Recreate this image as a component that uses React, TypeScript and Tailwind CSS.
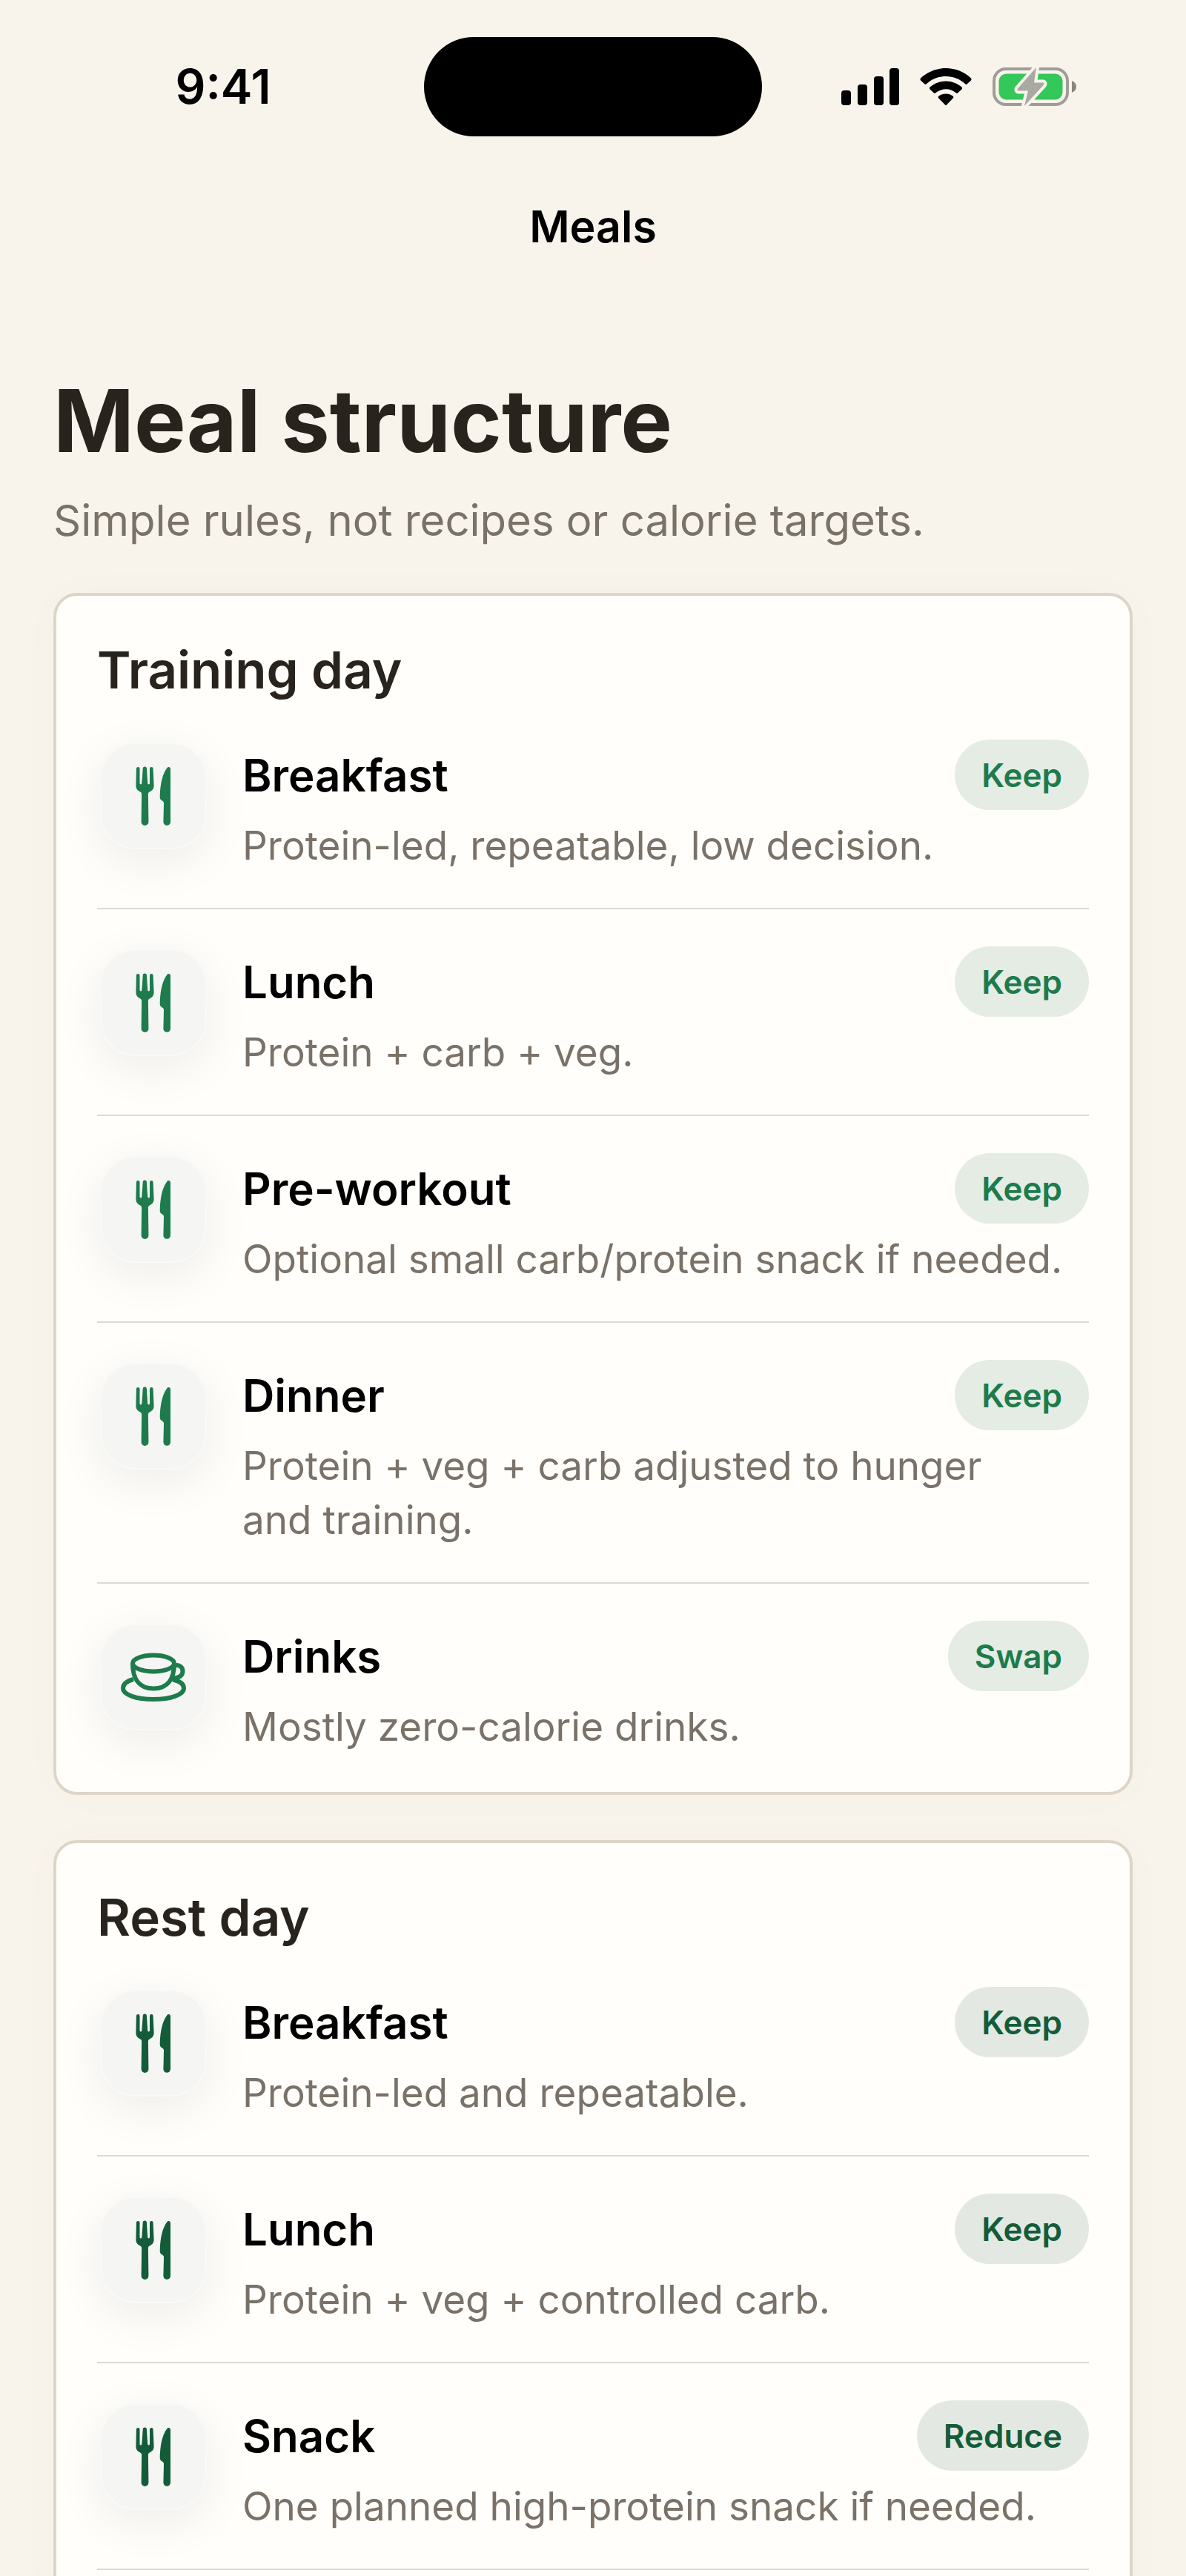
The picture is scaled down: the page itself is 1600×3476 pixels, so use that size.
type IconName = 'fork' | 'cup';

type Meal = {
  name: string;
  detail: string;
  action: string;
  icon: IconName;
};

type Day = {
  title: string;
  accent: string;
  badge: string;
  list: string;
  meals: Meal[];
};

const days: Day[] = [
  {
    title: 'Training day',
    accent: 'text-[#1d7b4c]',
    badge: 'bg-[#e4ece4]',
    list: '',
    meals: [
      { name: 'Breakfast', detail: 'Protein-led, repeatable, low decision.', action: 'Keep', icon: 'fork' },
      { name: 'Lunch', detail: 'Protein + carb + veg.', action: 'Keep', icon: 'fork' },
      { name: 'Pre-workout', detail: 'Optional small carb/protein snack if needed.', action: 'Keep', icon: 'fork' },
      { name: 'Dinner', detail: 'Protein + veg + carb adjusted to hunger and\u00a0training.', action: 'Keep', icon: 'fork' },
      { name: 'Drinks', detail: 'Mostly zero-calorie drinks.', action: 'Swap', icon: 'cup' }
    ]
  },
  {
    title: 'Rest day',
    accent: 'text-[#145c39]',
    badge: 'bg-[#e3e9e2]',
    // the list runs on past the fold
    list: 'border-b-2 mb-16',
    meals: [
      { name: 'Breakfast', detail: 'Protein-led and repeatable.', action: 'Keep', icon: 'fork' },
      { name: 'Lunch', detail: 'Protein + veg + controlled carb.', action: 'Keep', icon: 'fork' },
      { name: 'Snack', detail: 'One planned high-protein snack if needed.', action: 'Reduce', icon: 'fork' }
    ]
  }
];

const ForkKnifeIcon = () => (
  <svg width="48" height="80" viewBox="0 0 48 80" fill="currentColor" aria-hidden="true">
    <path d="M3.2 1a2.3 2.3 0 0 1 2.3 2.3V23a1.4 1.4 0 0 0 2.8 0L9.7 3.2a2.6 2.6 0 0 1 5.2 0L16.2 23a1.4 1.4 0 0 0 2.8 0L19 3.3a2.3 2.3 0 0 1 4.6 0L24.6 26c0 5-2.6 6.6-5.4 8.3-1.8 1.1-2.3 1.9-2.3 3.7l.5 37a4.9 4.9 0 0 1-9.8 0l.5-37c0-1.8-.5-2.6-2.3-3.7C3 32.6.4 31 .4 26L.9 3.3A2.3 2.3 0 0 1 3.2 1z" />
    <path d="M47 4v71a4.8 4.8 0 0 1-9.6 0l.6-25c0-1.8-.6-2.7-2.6-3.8-2-1.2-2.8-2.5-2.7-5.2C33 22 37 9 42.2 2.4 44 0 47 1 47 4z" />
  </svg>
);

const CupIcon = () => (
  <svg width="88" height="66" viewBox="0 0 88 66" fill="none" stroke="currentColor" strokeWidth="6" aria-hidden="true">
    <ellipse cx="44" cy="14.5" rx="28" ry="11" />
    <path d="M16 15C16 34 24 48.5 44 48.5S72 34 72 15" />
    <path d="M72.5 17.5c6-1.5 11 1.5 11 7.5 0 6.500-6 10-14.500 9.500" />
    <path d="M17 36C8 38.5 3 43 3 48c0 9 18 15 41 15s41-6 41-15c0-5-5-9.500-15-11.500" />
  </svg>
);

const SignalIcon = () => (
  <svg width="78" height="50" viewBox="0 0 78 50" aria-hidden="true">
    <rect x="0" y="30" width="13" height="20" rx="4" />
    <rect x="22" y="22" width="13" height="28" rx="4" />
    <rect x="44" y="11" width="13" height="39" rx="4" />
    <rect x="65" y="0" width="13" height="50" rx="4" />
  </svg>
);

const WifiIcon = () => (
  <svg width="70" height="50" viewBox="0 0 70 50" aria-hidden="true">
    <path d="M35 0C48 0 60 5 69 13.5q1 1.5 0 3L63.5 21.5q-1 .8-2 0C54 14.5 45 11 35 11S16 14.5 8.5 21.5q-1 .8-2 0L1 16.5q-1-1.5 0-3C10 5 22 0 35 0z" />
    <path d="M35 17.5c8 0 15.5 3 21.5 8q1 1.5 0 3L51 33.5q-1 .8-2 0C44.5 30 40 28.3 35 28.3S25.5 30 21 33.5q-1 .8-2 0L13.5 28.5q-1-1.5 0-3c6-5 13.5-8 21.5-8z" />
    <path d="M35 34.5c3.6 0 7 1.2 9.7 3.3q1.2 1.3 0 2.7L36 49.5q-1 1-2 0L25.3 40.5q-1.2-1.4 0-2.7C28 35.7 31.4 34.5 35 34.5z" />
  </svg>
);

const BatteryIcon = () => (
  <svg width="114" height="56" viewBox="0 0 114 56" aria-hidden="true">
    <rect x="2" y="4" width="99" height="48" rx="16" fill="none" stroke="#a09d98" strokeWidth="4" />
    <path d="M107 20c4 1.5 6 4.5 6 8s-2 6.5-6 8z" fill="#8a8783" />
    <rect x="8.5" y="10.5" width="86" height="35" rx="10" fill="#34c759" />
    <path
      d="M59 2 34 30.5c-1 1.5-.5 3 1 3h13L43 54 69 25.5c1-1.5.5-3-1-3H56z"
      fill="#a9a8a3"
      stroke="#f8f4ec"
      strokeWidth="8"
      strokeLinejoin="round"
      paintOrder="stroke"
    />
  </svg>
);

const StatusBar = () => (
  <div className="grid grid-cols-[1fr_456px_1fr] items-center pt-[50px]">
    <div className="flex justify-center pl-[30px]">
      <span className="text-[64px] leading-[72px] font-semibold">9:41</span>
    </div>
    <div className="h-[134px] rounded-full bg-black" />
    <div className="flex items-center justify-center gap-7 pr-10">
      <SignalIcon />
      <WifiIcon />
      <BatteryIcon />
    </div>
  </div>
);

const MealRow = ({ meal, day }: { meal: Meal; day: Day }) => (
  <li className="flex gap-11 pt-[50px] pb-[47px]">
    <div className="flex size-[152px] shrink-0 items-center justify-center">
      <div
        className={`flex size-36 items-center justify-center rounded-[48px] border-2 border-[#f9f9f7] bg-[#f5f5f3] shadow-[0_16px_64px_rgba(0,0,0,0.07)] ${day.accent}`}
      >
        {meal.icon === 'cup' ? <CupIcon /> : <ForkKnifeIcon />}
      </div>
    </div>
    <div className="min-w-0 flex-1">
      <div className="flex h-[95px] items-center justify-between">
        <h3 className="text-[60px] leading-[72px] font-semibold text-black">{meal.name}</h3>
        <span
          className={`flex h-full items-center rounded-full px-9 text-[44px] leading-[56px] font-semibold ${day.badge} ${day.accent}`}
        >
          {meal.action}
        </span>
      </div>
      <p className="mt-3 text-[53px] leading-[73px] text-[#7a7268]">{meal.detail}</p>
    </div>
  </li>
);

const DayCard = ({ day }: { day: Day }) => (
  <section className="rounded-[32px] border-4 border-[#ded5c9] bg-[#fffefa] px-[55px] pt-14 pb-1 shadow-[0_0_64px_rgba(0,0,0,0.02)]">
    <h2 className="text-[69px] leading-[88px] font-semibold text-[#28231d]">{day.title}</h2>
    <ul className={`divide-y-2 divide-[#dbdad7] border-[#dbdad7] ${day.list}`}>
      {day.meals.map((meal) => (
        <MealRow key={meal.name} meal={meal} day={day} />
      ))}
    </ul>
  </section>
);

const App = () => {
  return (
    <div className="h-screen overflow-hidden bg-[#f8f4ec] font-['Inter','Liberation_Sans',sans-serif] text-black">
      <StatusBar />
      <header className="flex h-[244px] items-center justify-center">
        <span className="text-[59px] leading-[72px] font-semibold">Meals</span>
      </header>
      <main className="px-18 pt-[66px]">
        <h1 className="text-[117px] leading-[148px] font-bold text-[#28231d]">Meal structure</h1>
        <p className="mt-[22px] mb-[60px] text-[58px] leading-[76px] text-[#7a7268]">
          Simple rules, not recipes or calorie targets.
        </p>
        <div className="flex flex-col gap-[61px]">
          {days.map((day) => (
            <DayCard key={day.title} day={day} />
          ))}
        </div>
      </main>
    </div>
  );
};

export default App;
